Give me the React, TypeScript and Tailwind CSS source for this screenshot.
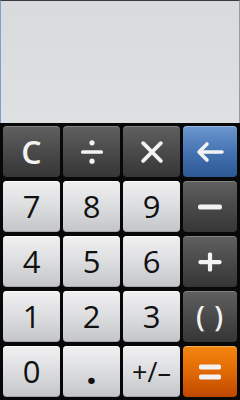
import React from "react";

const font = { fontFamily: '"Open Sans", "Noto Sans", sans-serif' };

const light =
  "bg-gradient-to-b from-[#f0f0f1] via-[#dcdddf] to-[#c4c5c8] text-[#111] shadow-[inset_0_1px_0_rgba(255,255,255,0.9),inset_0_-1px_0_rgba(0,0,0,0.15)]";
const dark =
  "bg-gradient-to-b from-[#606060] via-[#4a4a4a] to-[#363636] text-[#f2f2f2] shadow-[inset_0_1px_0_rgba(255,255,255,0.22)]";
const blue =
  "bg-gradient-to-b from-[#6d97cf] via-[#4674b3] to-[#2c5893] text-[#f4f4f4] shadow-[inset_0_1px_0_rgba(255,255,255,0.3)]";
const orange =
  "bg-gradient-to-b from-[#f4860f] via-[#e06a06] to-[#bf4700] text-[#f6f6f6] shadow-[inset_0_1px_0_rgba(255,255,255,0.3)]";

const W = "#f3f3f3";

const Divide = () => (
  <svg width="24" height="24" viewBox="0 0 24 24">
    <rect x="1" y="10.2" width="22" height="3.6" rx="1.5" fill={W} />
    <circle cx="12" cy="2.8" r="2.6" fill={W} />
    <circle cx="12" cy="21.2" r="2.6" fill={W} />
  </svg>
);
const Times = () => (
  <svg width="22" height="22" viewBox="0 0 22 22">
    <path d="M2.2 2.2 L19.8 19.8 M19.8 2.2 L2.2 19.8" stroke={W} strokeWidth="3.8" strokeLinecap="round" />
  </svg>
);
const Back = () => (
  <svg width="28" height="22" viewBox="0 0 28 22">
    <path d="M3 11 H26 M11 3 L3 11 L11 19" stroke={W} strokeWidth="3.6" strokeLinecap="round" strokeLinejoin="round" fill="none" />
  </svg>
);
const Minus = () => (
  <svg width="26" height="8" viewBox="0 0 26 8">
    <rect x="1" y="1.5" width="24" height="5" rx="2" fill={W} />
  </svg>
);
const Plus = () => (
  <svg width="24" height="20" viewBox="0 0 24 20">
    <rect x="0.5" y="8" width="23" height="4.2" rx="1.6" fill={W} />
    <rect x="9.9" y="0.5" width="4.2" height="19" rx="1.6" fill={W} />
  </svg>
);
const Equals = () => (
  <svg width="24" height="18" viewBox="0 0 24 18">
    <rect x="1" y="1.5" width="22" height="5" rx="1.8" fill={W} />
    <rect x="1" y="11.5" width="22" height="5" rx="1.8" fill={W} />
  </svg>
);

type K = { label: React.ReactNode; cls: string; text?: string; aria: string };

const keys: K[] = [
  { label: "C", cls: dark, text: "text-[32px] font-semibold", aria: "clear" },
  { label: <Divide />, cls: dark, aria: "divide" },
  { label: <Times />, cls: dark, aria: "multiply" },
  { label: <Back />, cls: blue, aria: "backspace" },
  { label: "7", cls: light, aria: "7" },
  { label: "8", cls: light, aria: "8" },
  { label: "9", cls: light, aria: "9" },
  { label: <Minus />, cls: dark, aria: "minus" },
  { label: "4", cls: light, aria: "4" },
  { label: "5", cls: light, aria: "5" },
  { label: "6", cls: light, aria: "6" },
  { label: <Plus />, cls: dark, aria: "plus" },
  { label: "1", cls: light, aria: "1" },
  { label: "2", cls: light, aria: "2" },
  { label: "3", cls: light, aria: "3" },
  { label: "( )", cls: dark, text: "text-[28px] font-semibold tracking-[1px] pb-[2px]", aria: "parentheses" },
  { label: "0", cls: light, aria: "0" },
  { label: ".", cls: light, text: "text-[38px] font-bold leading-none pb-[5px]", aria: "decimal" },
  { label: "+/–", cls: light, text: "text-[27px] font-medium", aria: "negate" },
  { label: <Equals />, cls: orange, aria: "equals" },
];

export default function App() {
  return (
    <div className="w-[240px] h-[400px] bg-[#080808] overflow-hidden" style={font}>
      <div className="h-[123px] bg-gradient-to-b from-[#d9dadc] to-[#dfe0e2] border-t border-t-[#3a3a3a] border-l border-l-[#7d9fcf] border-r border-r-[#9a9ca0]" />
      <div className="grid grid-cols-[57px_57px_57px_54px] grid-rows-[51px_51px_51px_51px_51px] gap-x-[3px] gap-y-[4px] pt-[3px] pl-[3px]">
        {keys.map((k, i) => (
          <button
            key={i}
            aria-label={k.aria}
            className={`flex items-center justify-center rounded-[4px] leading-none ${k.cls} ${k.text ?? "text-[31px] font-normal"}`}
          >
            {k.label}
          </button>
        ))}
      </div>
    </div>
  );
}
